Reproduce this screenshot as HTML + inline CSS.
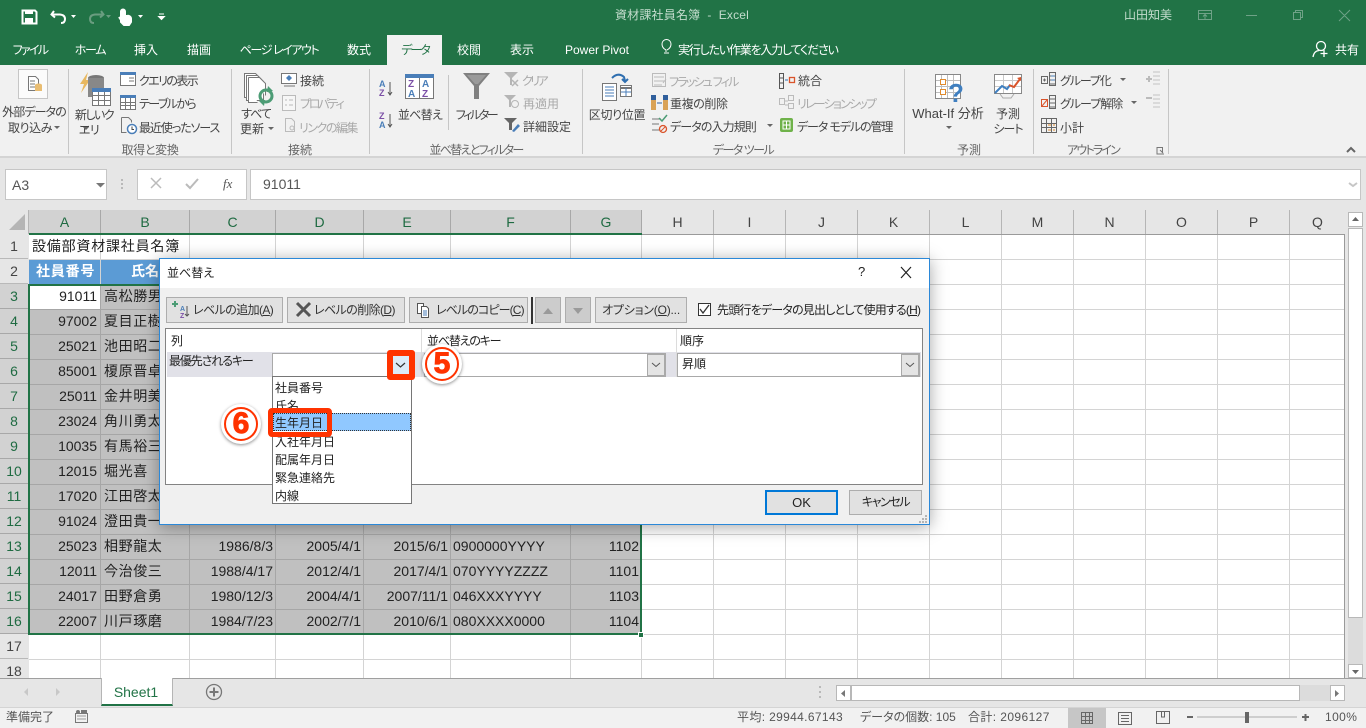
<!DOCTYPE html>
<html lang="ja"><head><meta charset="utf-8"><title>資材課社員名簿 - Excel</title>
<style>
html,body{margin:0;padding:0;width:1366px;height:728px;overflow:hidden;background:#e6e6e6}
body{position:relative;font-family:"Liberation Sans","Noto Sans CJK JP",sans-serif;font-size:12px;color:#444;font-feature-settings:"palt"}
.b{position:absolute;box-sizing:border-box}
.t{position:absolute;white-space:nowrap;line-height:16px;margin-top:1px}
.c{transform:translateX(-50%)}
.w{color:#fff}.g{color:#a9a9a9}.l{color:#666}
svg{position:absolute;left:0;top:0}
.ch,.rh{position:absolute;text-align:center;color:#444;font-size:14px}
.ch{top:210px;height:24px;line-height:24px;border-right:1px solid #b5b5b5;box-sizing:border-box;background:#e6e6e6}
.ch.s{background:#d2d2d2;color:#1f6b42;border-right-color:#a8a8a8}
.rh{left:0;width:28px;height:25px;line-height:25px;background:#e6e6e6;border-bottom:1px solid #b9b9b9;box-sizing:border-box}
.rh.s{background:#d2d2d2;color:#1f6b42;border-bottom-color:#a8a8a8}
.d{position:absolute;height:25px;line-height:24px;font-size:14px;color:#222;white-space:nowrap;overflow:hidden}
.n{letter-spacing:.6px}
.r{text-align:right}
.btn{position:absolute;box-sizing:border-box;background:#e1e1e1;border:1px solid #adadad;height:26px;top:297px;line-height:24px;color:#333;white-space:nowrap}
.it{position:absolute;left:275px;line-height:18px;height:18px;font-size:12px;color:#222}
</style></head><body>

<!-- title + tabs -->
<div class="b" style="left:0;top:0;width:1366px;height:65px;background:#217346"></div>
<div class="b" style="left:387px;top:35px;width:55px;height:30px;background:#f1f1f1"></div>
<div class="t c" style="left:682px;top:6px;color:#c4dccd;letter-spacing:.2px">資材課社員名簿&nbsp; -&nbsp; Excel</div>
<div class="t" style="left:1124px;top:6px;color:#c4dccd">山田知美</div>
<div class="t c w" style="left:30px;top:41px;letter-spacing:-1.700px">ファイル</div>
<div class="t c w" style="left:90px;top:41px;letter-spacing:-1.300px">ホーム</div>
<div class="t c w" style="left:146px;top:41px">挿入</div>
<div class="t c w" style="left:199px;top:41px">描画</div>
<div class="t c w" style="left:279px;top:41px;letter-spacing:-1.400px">ページ レイアウト</div>
<div class="t c w" style="left:359px;top:41px">数式</div>
<div class="t c" style="left:415px;top:41px;color:#217346;letter-spacing:-2px">データ</div>
<div class="t c w" style="left:469px;top:41px">校閲</div>
<div class="t c w" style="left:522px;top:41px">表示</div>
<div class="t c w" style="left:597px;top:41px">Power Pivot</div>
<div class="t w" style="left:678px;top:41px;letter-spacing:-1.200px">実行したい作業を入力してください</div>
<div class="t w" style="left:1335px;top:41px">共有</div>

<!-- ribbon -->
<div class="b" style="left:0;top:65px;width:1366px;height:93px;background:#f1f1f1;border-bottom:2px solid #d4d4d4"></div>
<div class="b" style="left:18px;top:69px;width:30px;height:30px;background:#fbfbfb;border:1px solid #c6c6c6"></div>
<div class="t c" style="left:34px;top:103px;letter-spacing:-.9px">外部データの</div>
<div class="t c" style="left:30px;top:119px;letter-spacing:-.4px">取り込み</div>
<div class="t c" style="left:94px;top:106px;letter-spacing:-1.500px">新しいク</div>
<div class="t c" style="left:89px;top:121px;letter-spacing:-.5px">エリ</div>
<div class="t" style="left:139px;top:72px;letter-spacing:-1.600px">クエリの表示</div>
<div class="t" style="left:139px;top:95px;letter-spacing:-1.600px">テーブルから</div>
<div class="t" style="left:139px;top:119px;letter-spacing:-1.100px">最近使ったソース</div>
<div class="t c l" style="left:150px;top:141px;letter-spacing:-.3px">取得と変換</div>
<div class="t c" style="left:256px;top:105px;letter-spacing:-1px">すべて</div>
<div class="t c" style="left:252px;top:120px">更新</div>
<div class="t" style="left:300px;top:72px">接続</div>
<div class="t g" style="left:300px;top:95px;letter-spacing:-2.200px">プロパティ</div>
<div class="t g" style="left:299px;top:119px;letter-spacing:-1.500px">リンクの編集</div>
<div class="t c l" style="left:300px;top:141px">接続</div>
<div class="t c" style="left:420px;top:106px;letter-spacing:-.7px">並べ替え</div>
<div class="t c" style="left:476px;top:106px;letter-spacing:-2.400px">フィルター</div>
<div class="t g" style="left:522px;top:72px;letter-spacing:-2.600px">クリア</div>
<div class="t g" style="left:523px;top:95px">再適用</div>
<div class="t" style="left:523px;top:118px">詳細設定</div>
<div class="t c l" style="left:476px;top:141px;letter-spacing:-1.700px">並べ替えとフィルター</div>
<div class="t c" style="left:617px;top:106px;letter-spacing:-.3px">区切り位置</div>
<div class="t g" style="left:669px;top:73px;letter-spacing:-1.800px">フラッシュ フィル</div>
<div class="t" style="left:670px;top:95px;letter-spacing:-.4px">重複の削除</div>
<div class="t" style="left:670px;top:118px;letter-spacing:-.9px">データの入力規則</div>
<div class="t" style="left:798px;top:72px">統合</div>
<div class="t g" style="left:797px;top:95px;letter-spacing:-1.800px">リレーションシップ</div>
<div class="t" style="left:797px;top:118px;letter-spacing:-1.100px">データ モデルの管理</div>
<div class="t c l" style="left:743px;top:141px;letter-spacing:-1.500px">データ ツール</div>
<div class="t c" style="left:948px;top:105px;font-size:13px">What-If 分析</div>
<div class="t c" style="left:1008px;top:105px">予測</div>
<div class="t c" style="left:1008px;top:120px;letter-spacing:-1px">シート</div>
<div class="t c l" style="left:969px;top:141px">予測</div>
<div class="t" style="left:1060px;top:72px;letter-spacing:-1.100px">グループ化</div>
<div class="t" style="left:1060px;top:95px;letter-spacing:-1px">グループ解除</div>
<div class="t" style="left:1060px;top:119px">小計</div>
<div class="t c l" style="left:1093px;top:141px;letter-spacing:-1.800px">アウトライン</div>

<!-- formula bar -->
<div class="b" style="left:5px;top:169px;width:102px;height:31px;background:#fff;border:1px solid #c6c6c6"></div>
<div class="t" style="left:12px;top:176px;font-size:14px;color:#555">A3</div>
<div class="b" style="left:137px;top:169px;width:110px;height:31px;background:#fff;border:1px solid #c6c6c6"></div>
<div class="t" style="left:223px;top:175px;font:italic 13px 'Liberation Serif',serif;color:#555">fx</div>
<div class="b" style="left:250px;top:169px;width:1111px;height:31px;background:#fff;border:1px solid #c6c6c6"></div>
<div class="t" style="left:263px;top:175px;font-size:14px;color:#555">91011</div>

<!-- grid background -->
<div class="b" style="left:29px;top:235px;width:1315px;height:443px;background:#fff"></div>
<div class="b" style="left:29px;top:285px;width:612px;height:349px;background:#c0c0c0"></div>
<div class="b" style="left:29px;top:260px;width:160px;height:24px;background:#5b9bd5"></div>
<div class="b" style="left:30px;top:286px;width:70px;height:23px;background:#fff"></div>
<svg width="1366" height="728" viewBox="0 0 1366 728" style="z-index:0">
<g stroke="#d4d4d4" fill="none">
<path d="M100.500 235V284M189.500 235V284M275.500 235V284M363.500 235V284M450.500 235V284M570.500 235V284M641.500 235V678M713.500 235V678M785.500 235V678M857.500 235V678M929.500 235V678M1001.500 235V678M1073.500 235V678M1145.500 235V678M1217.500 235V678M1289.500 235V678"/>
<path d="M100.500 634V678M189.500 634V678M275.500 634V678M363.500 634V678M450.500 634V678M570.500 634V678"/>
<path d="M29 259.500H1344M29 284.500H1344M642 309.500H1344M642 334.500H1344M642 359.500H1344M642 384.500H1344M642 409.500H1344M642 434.500H1344M642 459.500H1344M642 484.500H1344M642 509.500H1344M642 534.500H1344M642 559.500H1344M642 584.500H1344M642 609.500H1344M29 634.500H1344M29 659.500H1344"/>
</g>
<g stroke="#a6a6a6" fill="none">
<path d="M100.500 285V634M189.500 285V634M275.500 285V634M363.500 285V634M450.500 285V634M570.500 285V634"/>
<path d="M29 309.500H641M29 334.500H641M29 359.500H641M29 384.500H641M29 409.500H641M29 434.500H641M29 459.500H641M29 484.500H641M29 509.500H641M29 534.500H641M29 559.500H641M29 584.500H641M29 609.500H641"/>
</g>
</svg>

<!-- column headers -->
<div class="ch" style="left:0;width:29px"></div>
<div class="ch s" style="left:29px;width:72px">A</div>
<div class="ch s" style="left:101px;width:89px">B</div>
<div class="ch s" style="left:190px;width:86px">C</div>
<div class="ch s" style="left:276px;width:88px">D</div>
<div class="ch s" style="left:364px;width:87px">E</div>
<div class="ch s" style="left:451px;width:120px">F</div>
<div class="ch s" style="left:571px;width:71px">G</div>
<div class="ch" style="left:642px;width:72px">H</div>
<div class="ch" style="left:714px;width:72px">I</div>
<div class="ch" style="left:786px;width:72px">J</div>
<div class="ch" style="left:858px;width:72px">K</div>
<div class="ch" style="left:930px;width:72px">L</div>
<div class="ch" style="left:1002px;width:72px">M</div>
<div class="ch" style="left:1074px;width:72px">N</div>
<div class="ch" style="left:1146px;width:72px">O</div>
<div class="ch" style="left:1218px;width:72px">P</div>
<div class="ch" style="left:1290px;width:55px;border-right:0">Q</div>
<div class="b" style="left:29px;top:234px;width:1315px;height:1px;background:#9a9a9a"></div>
<div class="b" style="left:29px;top:233px;width:613px;height:2px;background:#217346"></div>
<div class="b" style="left:1344px;top:234px;width:1px;height:444px;background:#9a9a9a"></div>

<!-- row headers -->
<div class="rh" style="top:234px">1</div><div class="rh" style="top:259px">2</div>
<div class="rh s" style="top:284px">3</div><div class="rh s" style="top:309px">4</div>
<div class="rh s" style="top:334px">5</div><div class="rh s" style="top:359px">6</div>
<div class="rh s" style="top:384px">7</div><div class="rh s" style="top:409px">8</div>
<div class="rh s" style="top:434px">9</div><div class="rh s" style="top:459px">10</div>
<div class="rh s" style="top:484px">11</div><div class="rh s" style="top:509px">12</div>
<div class="rh s" style="top:534px">13</div><div class="rh s" style="top:559px">14</div>
<div class="rh s" style="top:584px">15</div><div class="rh s" style="top:609px">16</div>
<div class="rh" style="top:634px">17</div><div class="rh" style="top:659px;height:19px;border:0;overflow:hidden">18</div>

<!-- cells -->
<div class="d" style="left:32px;top:234px;letter-spacing:.8px">設備部資材課社員名簿</div>
<div class="d" style="left:36px;top:259px;color:#fff;font-weight:bold;letter-spacing:.8px">社員番号</div>
<div class="d" style="left:131px;top:259px;color:#fff;font-weight:bold">氏名</div>
<div class="d r" style="left:30px;width:67px;top:284px">91011</div><div class="d n" style="left:104px;top:284px">高松勝男</div>
<div class="d r" style="left:30px;width:67px;top:309px">97002</div><div class="d n" style="left:104px;top:309px">夏目正樹</div>
<div class="d r" style="left:30px;width:67px;top:334px">25021</div><div class="d n" style="left:104px;top:334px">池田昭二</div>
<div class="d r" style="left:30px;width:67px;top:359px">85001</div><div class="d n" style="left:104px;top:359px">榎原晋卓</div>
<div class="d r" style="left:30px;width:67px;top:384px">25011</div><div class="d n" style="left:104px;top:384px">金井明美</div>
<div class="d r" style="left:30px;width:67px;top:409px">23024</div><div class="d n" style="left:104px;top:409px">角川勇太</div>
<div class="d r" style="left:30px;width:67px;top:434px">10035</div><div class="d n" style="left:104px;top:434px">有馬裕三</div>
<div class="d r" style="left:30px;width:67px;top:459px">12015</div><div class="d n" style="left:104px;top:459px">堀光喜</div>
<div class="d r" style="left:30px;width:67px;top:484px">17020</div><div class="d n" style="left:104px;top:484px">江田啓太</div>
<div class="d r" style="left:30px;width:67px;top:509px">91024</div><div class="d n" style="left:104px;top:509px">澄田貴一</div>
<div class="d r" style="left:30px;width:67px;top:534px">25023</div><div class="d n" style="left:104px;top:534px">相野龍太</div>
<div class="d r" style="left:30px;width:67px;top:559px">12011</div><div class="d n" style="left:104px;top:559px">今治俊三</div>
<div class="d r" style="left:30px;width:67px;top:584px">24017</div><div class="d n" style="left:104px;top:584px">田野倉勇</div>
<div class="d r" style="left:30px;width:67px;top:609px">22007</div><div class="d n" style="left:104px;top:609px">川戸琢磨</div>

<div class="d r" style="left:190px;width:83px;top:534px">1986/8/3</div><div class="d r" style="left:276px;width:85px;top:534px">2005/4/1</div><div class="d r" style="left:364px;width:84px;top:534px">2015/6/1</div><div class="d" style="left:453px;top:534px">0900000YYYY</div><div class="d r" style="left:571px;width:68px;top:534px">1102</div>
<div class="d r" style="left:190px;width:83px;top:559px">1988/4/17</div><div class="d r" style="left:276px;width:85px;top:559px">2012/4/1</div><div class="d r" style="left:364px;width:84px;top:559px">2017/4/1</div><div class="d" style="left:453px;top:559px">070YYYYZZZZ</div><div class="d r" style="left:571px;width:68px;top:559px">1101</div>
<div class="d r" style="left:190px;width:83px;top:584px">1980/12/3</div><div class="d r" style="left:276px;width:85px;top:584px">2004/4/1</div><div class="d r" style="left:364px;width:84px;top:584px">2007/11/1</div><div class="d" style="left:453px;top:584px">046XXXYYYY</div><div class="d r" style="left:571px;width:68px;top:584px">1103</div>
<div class="d r" style="left:190px;width:83px;top:609px">1984/7/23</div><div class="d r" style="left:276px;width:85px;top:609px">2002/7/1</div><div class="d r" style="left:364px;width:84px;top:609px">2010/6/1</div><div class="d" style="left:453px;top:609px">080XXXX0000</div><div class="d r" style="left:571px;width:68px;top:609px">1104</div>

<!-- selection border -->
<div class="b" style="left:28px;top:284px;width:614px;height:351px;border:2px solid #217346"></div>
<div class="b" style="left:638px;top:632px;width:6px;height:6px;background:#217346;border:1px solid #fff"></div>

<!-- scrollbars and sheet tabs -->
<div class="b" style="left:1345px;top:210px;width:21px;height:468px;background:#e6e6e6"></div>
<div class="b" style="left:1348px;top:228px;width:15px;height:436px;background:#dcdcdc"></div>
<div class="b" style="left:1348px;top:228px;width:15px;height:390px;background:#fff;border:1px solid #b8b8b8"></div>
<div class="b" style="left:1348px;top:212px;width:15px;height:15px;background:#fff;border:1px solid #b8b8b8"></div>
<div class="b" style="left:1348px;top:664px;width:15px;height:14px;background:#fff;border:1px solid #b8b8b8"></div>
<div class="b" style="left:0;top:678px;width:1366px;height:29px;background:#e6e6e6;border-top:1px solid #9f9f9f"></div>
<div class="b" style="left:101px;top:678px;width:72px;height:28px;background:#fff;border:1px solid #b5b5b5;border-top:0;border-bottom:2px solid #217346"></div>
<div class="t c" style="left:136px;top:683px;font-size:14px;color:#217346">Sheet1</div>
<div class="b" style="left:836px;top:685px;width:508px;height:16px;background:#dcdcdc"></div>
<div class="b" style="left:851px;top:685px;width:449px;height:16px;background:#fff;border:1px solid #b8b8b8"></div>
<div class="b" style="left:836px;top:685px;width:15px;height:16px;background:#fff;border:1px solid #b8b8b8"></div>
<div class="b" style="left:1330px;top:685px;width:15px;height:16px;background:#fff;border:1px solid #b8b8b8"></div>
<div class="b" style="left:0;top:707px;width:1366px;height:21px;background:#f1f1f1;border-top:1px solid #d4d4d4"></div>
<div class="b" style="left:1068px;top:708px;width:38px;height:20px;background:#c6c6c6"></div>
<div class="t" style="left:6px;top:708px;color:#555">準備完了</div>
<div class="t" style="left:737px;top:708px;color:#555;letter-spacing:.35px">平均: 29944.67143</div>
<div class="t" style="left:860px;top:708px;color:#555">データの個数: 105</div>
<div class="t" style="left:968px;top:708px;color:#555;letter-spacing:.4px">合計: 2096127</div>
<div class="t" style="left:1325px;top:708px;color:#555;letter-spacing:.4px">100%</div>

<!-- icons -->
<svg width="1366" height="728" viewBox="0 0 1366 728" fill="none">
<!-- QAT -->
<path d="M22.500 10.500H35L36.500 12V23.500H22.500Z" stroke="#fff" stroke-width="2"/><rect x="25" y="10" width="8" height="4" fill="#fff"/><rect x="25" y="18" width="8" height="5" fill="#fff"/>
<path d="M54 11L51.500 14.500L55 17.500M52 14.500H60Q65 15 65 19T61 23" stroke="#fff" stroke-width="2"/><path d="M71 15h5l-2.500 3z" fill="#fff"/>
<path d="M101 11L103.500 14.500L100 17.500M103 14.500H95Q90 15 90 19T94 23" stroke="#6a9d80" stroke-width="2"/><path d="M106 15h5l-2.500 3z" fill="#6a9d80"/>
<path d="M121 22V11.500a2 2 0 0 1 4 0V16h2a3 3 0 0 1 4 3v3l-2 3h-5zM119 17l2 3" stroke="#fff" stroke-width="2" fill="#fff"/><path d="M138 15h5l-2.500 3z" fill="#fff"/>
<path d="M159 14h5M158.500 16.500h6l-3 3z" stroke="#fff" fill="#fff"/>
<!-- tab icons -->
<path d="M666 54v-2q-4-2-4-6a4.500 4.500 0 0 1 9 0q0 4-4 6M664 55h5" stroke="#fff" transform="translate(0 -2)"/>
<circle cx="1321" cy="46" r="4.500" stroke="#fff" stroke-width="1.300"/><path d="M1313 57q1-6 6-6.500M1324 50v7M1320.500 53.500h7" stroke="#fff" stroke-width="1.300"/>
<!-- window -->
<path d="M1198.500 10.500h13v9h-13zM1198.500 13.500h13M1205 19v-4M1203 16.500l2-2 2 2M1246 15.500h11M1293.500 12.500h7v7h-7zM1295.500 12.500v-2h7v7h-2M1339 10l11 11M1350 10l-11 11" stroke="#6fa287"/>
<!-- ribbon seps -->
<path d="M68.500 69V154M231.500 69V154M369.500 69V154M582.500 69V154M904.500 69V154M1033.500 69V154M1168.500 69V154M448.500 75V130" stroke="#c6c6c6"/>
<!-- external data -->
<path d="M28.500 76.500h7l3 3v11h-10z" fill="#fff" stroke="#777"/><path d="M30 81h5M30 84h5M30 87h5" stroke="#777"/><ellipse cx="38.500" cy="85" rx="3.500" ry="1.500" fill="#e9bd72"/><rect x="35" y="85" width="7" height="6" fill="#e9bd72"/>
<!-- new query -->
<path d="M88 72l-8 12h4l-3 9 9-13h-4z" fill="#e8b860"/><ellipse cx="96" cy="78" rx="8" ry="3" fill="#777"/><path d="M88 78h16v19H88z" fill="#888"/>
<rect x="92.500" y="89.500" width="18" height="16" fill="#fff" stroke="#777"/><rect x="92" y="88" width="19" height="4" fill="#4a7eb8"/><path d="M98.500 92v13M104.500 92v13M93 95.500h17M93 100.500h17" stroke="#777"/>
<!-- small table icons -->
<rect x="120.500" y="72.500" width="15" height="13" fill="#fff" stroke="#777"/><rect x="120" y="72" width="16" height="3" fill="#4a7eb8"/><path d="M129 78h5M129 81h5" stroke="#777"/>
<rect x="120.500" y="95.500" width="15" height="14" fill="#fff" stroke="#777"/><rect x="120" y="95" width="16" height="3" fill="#4a7eb8"/><path d="M125.500 98v11M130.500 98v11M121 102.500h14M121 105.500h14" stroke="#777"/>
<path d="M121.500 117.500h7l3 3v2M121.500 117.500v15h5" stroke="#777"/><circle cx="132" cy="129" r="4.500" fill="#fff" stroke="#4a7eb8" stroke-width="1.500"/><path d="M132 126.500v3h2" stroke="#444"/>
<!-- refresh all -->
<path d="M244.500 73.500h11l6 6v18h-17z" fill="#fff" stroke="#777"/><path d="M246.500 75.500h11l6 6v19h-17z" fill="#fff" stroke="#777"/><path d="M248.500 77.500h11l6 6v12M248.500 77.500v25h9" fill="#fff" stroke="#777"/>
<circle cx="266" cy="96" r="6" stroke="#4c9c75" stroke-width="3"/><path d="M268 86l5 5-6 1z" fill="#4c9c75"/><path d="M264 106l-5-5 6-1z" fill="#4c9c75"/>
<!-- connections small -->
<rect x="281.500" y="73.500" width="15" height="10" fill="#fff" stroke="#777"/><path d="M284 86h11" stroke="#777"/><path d="M289 75l3 3-3 3-3-3z" fill="#4a7eb8"/>
<rect x="282.500" y="95.500" width="13" height="15" fill="#f6f6f6" stroke="#bbb"/><path d="M285 100h2M285 105h2M289 100h4M289 105h4" stroke="#bbb"/>
<path d="M285.500 118.500h6l3 3v10h-9z" stroke="#bbb"/><path d="M290 128a2 2 0 1 1 4 0 2 2 0 1 1-4 0" stroke="#bbb"/>
<!-- sort -->
<g font-family="Liberation Sans" font-size="9" font-weight="bold"><text x="379" y="87" fill="#4a7eb8">A</text><text x="379" y="96" fill="#7b4fa6">Z</text><text x="379" y="119" fill="#7b4fa6">Z</text><text x="379" y="128" fill="#4a7eb8">A</text></g>
<path d="M390 82v12M388 92l2 3 2-3M390 114v12M388 124l2 3 2-3" stroke="#555"/>
<rect x="405.500" y="75.500" width="28" height="23" fill="#fff" stroke="#777"/><rect x="405" y="74" width="29" height="4" fill="#4a7eb8"/><path d="M419.500 78v20" stroke="#777"/>
<g font-family="Liberation Sans" font-size="10" font-weight="bold"><text x="408" y="87" fill="#7b4fa6">Z</text><text x="408" y="97" fill="#4a7eb8">A</text><text x="422" y="87" fill="#4a7eb8">A</text><text x="422" y="97" fill="#7b4fa6">Z</text></g>
<!-- filter -->
<path d="M463 73h27l-11 13v13h-5V86z" fill="#808080"/><path d="M467 75h19l-8 9h-3z" fill="#9a9a9a"/>
<path d="M504 72h14l-6 6v7h-2v-7z" fill="#b5b5b5"/><path d="M512 80l6 6M518 80l-6 6" stroke="#b5b5b5" stroke-width="1.500"/>
<path d="M504 95h12l-5 5v7h-2v-7z" fill="#b5b5b5"/><circle cx="515" cy="104" r="3.500" stroke="#b5b5b5"/>
<path d="M504 118h13l-5 5v7h-3v-7z" fill="#666"/><path d="M512 131l6-7 2 2-6 6z" fill="#4a7eb8"/>
<!-- text to columns -->
<rect x="602.500" y="83.500" width="14" height="17" fill="#fff" stroke="#777"/><path d="M605 87h9M605 90h9M605 93h9M605 96h9" stroke="#4a7eb8"/>
<rect x="620.500" y="85.500" width="11" height="11" fill="#fff" stroke="#777"/><path d="M621 88h10" stroke="#777" stroke-width="2"/><path d="M626 88v8M621 92h10" stroke="#4a7eb8"/>
<path d="M612 78q6-6 12-1l1 4M622 79l3 3 3-3" stroke="#2f6fb0" stroke-width="2"/>
<!-- data tools -->
<rect x="652.500" y="73.500" width="13" height="13" stroke="#bbb"/><path d="M654 77h10M654 81h10M654 85h8M663 83l3-4" stroke="#bbb"/>
<rect x="651" y="95" width="5" height="15" fill="#d9a256"/><rect x="651" y="95" width="5" height="5" fill="#2f5f9c"/><rect x="663" y="95" width="5" height="15" fill="#d9a256"/><rect x="663" y="95" width="5" height="5" fill="#2f5f9c"/><path d="M657 103h5" stroke="#2f5f9c"/>
<path d="M652 119h9M652 124h7M652 130h7" stroke="#777"/><path d="M659 118l3 3 5-6" stroke="#4c9c75" stroke-width="1.500"/><circle cx="663" cy="129" r="3.500" stroke="#d9542b" stroke-width="1.300"/><path d="M660.500 131.500l5-5" stroke="#d9542b"/>
<path d="M779.500 73.500h4v15h-4zM780 78h3M780 83h3" stroke="#555"/><path d="M785 80h3" stroke="#2f6fb0"/><rect x="789.500" y="77.500" width="5" height="5" stroke="#d9542b" stroke-width="1.300"/>
<path d="M779.500 98.500h5v6h-5zM788.500 95.500h5v5h-5zM788.500 103.500h5v5h-5zM785 101h3M785 105h3" stroke="#bbb"/>
<rect x="780" y="118" width="13" height="14" rx="2" fill="#6fb24a"/><path d="M783 121h7v8h-7zM786.500 121v8M783 125h7" stroke="#fff"/>
<!-- what-if -->
<rect x="935.500" y="74.500" width="25" height="24" fill="#fff" stroke="#888"/><path d="M941.500 75v23M947.500 75v23M953.500 75v23M936 80.500h24M936 86.500h24M936 92.500h24" stroke="#bdbdbd"/><rect x="940.500" y="79.500" width="5" height="5" fill="#fff" stroke="#e08a2c"/><rect x="940.500" y="89.500" width="5" height="5" fill="#fff" stroke="#e08a2c"/>
<text x="948" y="102" font-family="Liberation Sans" font-size="26" font-weight="bold" fill="#3f7fc0">?</text>
<!-- forecast -->
<rect x="994.500" y="74.500" width="27" height="19" fill="#fff" stroke="#888"/><path d="M1003.500 75v18M1012.500 75v18M995 80.500h26M995 86.500h26" stroke="#c9c9c9"/><path d="M995 93l7-7 5 3 3-4" stroke="#3f7fc0" stroke-width="2"/><path d="M1009 85l5 2 6-8" stroke="#d9542b" stroke-width="2"/><path d="M1017 78l4-1v4z" fill="#d9542b"/><path d="M1000 94l3 4h8l3-4" stroke="#aaa"/>
<!-- outline -->
<rect x="1041.500" y="76.500" width="6" height="7" stroke="#666"/><path d="M1043 80h3M1044.500 78.500v3M1049.500 72.500h6v13h-6zM1050 76h5M1050 80h5M1050 84h5" stroke="#666"/><path d="M1051 76h4M1051 80h4" stroke="#4a7eb8"/>
<rect x="1041.500" y="99.500" width="6" height="7" stroke="#d9542b"/><path d="M1042 106l5-6" stroke="#d9542b"/><path d="M1049.500 95.500h6v13h-6zM1050 99h5M1050 103h5M1050 107h5" stroke="#666"/>
<rect x="1041.500" y="118.500" width="15" height="14" stroke="#666"/><path d="M1046.500 118v14M1051.500 118v14M1042 123.500h14M1042 127.500h14" stroke="#666"/><path d="M1048 125h3M1053 125h2M1048 130h3M1053 130h2" stroke="#e08a2c"/>
<path d="M1146 79h6M1149 76v6" stroke="#bbb" stroke-width="2"/><path d="M1153 72h7M1153 76h7M1153 80h7M1153 84h7" stroke="#c4c4c4"/>
<path d="M1146 98h6" stroke="#bbb" stroke-width="2"/><path d="M1153 95h7M1153 99h7M1153 103h7M1153 107h7" stroke="#c4c4c4"/>
<path d="M1157.500 147.500h5v5M1157 147v7h7M1160 150l3 3" stroke="#777"/>
<path d="M1347 152l4-4 4 4" stroke="#666" stroke-width="2"/>
<!-- dropdown triangles -->
<g fill="#666"><path d="M54 126h6l-3 3zM83 127h6l-3 3zM268 127h6l-3 3zM767 124h6l-3 3zM946 126h6l-3 3zM1120 78h6l-3 3zM1131 101h6l-3 3z"/></g>
<!-- formula bar -->
<path d="M96 183h9l-4.500 4.500z" fill="#777"/><path d="M122 179v2M122 183v2M122 187v2" stroke="#aaa" stroke-width="1.500"/>
<path d="M151 178l10 10M161 178l-10 10" stroke="#bbb" stroke-width="1.500"/><path d="M186 184l4 4 8-9" stroke="#bbb" stroke-width="2"/>
<path d="M1349 183l4 3 4-3" stroke="#c6c6c6" stroke-width="2"/>
<!-- corner, scroll -->
<path d="M25 214V230H9z" fill="#b5b5b5"/>
<path d="M1352 221h7l-3.500-4zM1352 670h7l-3.500 4z" fill="#666"/>
<path d="M845 690v7l-4-3.500zM1335 690v7l4-3.500z" fill="#777"/>
<path d="M28 688v8l-4-4zM56 688v8l4-4z" fill="#c8c8c8"/>
<circle cx="214" cy="692" r="7.500" stroke="#777" stroke-width="1.300"/><path d="M209.500 692h9M214 687.500v9" stroke="#777" stroke-width="2"/>
<path d="M820 686v2M820 691v2M820 696v2" stroke="#aaa" stroke-width="1.500"/>
<!-- status -->
<rect x="75.500" y="713.500" width="12" height="9" stroke="#777"/><circle cx="78" cy="712" r="2" fill="#777"/><rect x="81" y="710" width="6" height="3" fill="#777"/><path d="M77 716h9M77 719h9" stroke="#999"/>
<path d="M1081.500 712.500h11v11h-11zM1085.500 713v10M1089.500 713v10M1082 716.500h10M1082 720.500h10" stroke="#666"/>
<path d="M1118.500 712.500h13v12h-13zM1121 715.500h8M1121 718.500h8M1121 721.500h8" stroke="#666"/>
<path d="M1156.500 711.500h13v12h-13zM1161.500 712v5h3v-5" stroke="#666"/>
<path d="M1187 717h6M1302 717h7M1305.500 714v7" stroke="#666" stroke-width="2"/><path d="M1197 717h100" stroke="#aaa"/><rect x="1245" y="712" width="4" height="11" fill="#666"/>
</svg>

<!-- dialog -->
<div class="b" style="left:159px;top:258px;width:771px;height:267px;background:#f0f0f0;border:1px solid #2b88d8;box-shadow:0 2px 16px rgba(0,0,0,.35)"></div>
<div class="b" style="left:160px;top:259px;width:769px;height:29px;background:#fff"></div>
<div class="t" style="left:167px;top:264px;color:#222">並べ替え</div>
<div class="t" style="left:858px;top:263px;font-size:13px;color:#222">?</div>

<div class="btn" style="left:166px;width:117px;padding-left:26px;letter-spacing:-.6px">レベルの追加(<u>A</u>)</div>
<div class="btn" style="left:287px;width:118px;padding-left:26px;letter-spacing:-.6px">レベルの削除(<u>D</u>)</div>
<div class="btn" style="left:409px;width:119px;padding-left:26px;letter-spacing:-.9px">レベルのコピー(<u>C</u>)</div>
<div class="b" style="left:531px;top:297px;width:2px;height:27px;background:#333"></div>
<div class="btn" style="left:535px;width:26px;background:#ccc"></div>
<div class="btn" style="left:565px;width:26px;background:#ccc"></div>
<div class="btn" style="left:595px;width:92px;text-align:center;letter-spacing:-.2px">オプション(<u>O</u>)...</div>
<div class="b" style="left:698px;top:303px;width:13px;height:13px;background:#fff;border:1px solid #333"></div>
<div class="t" style="left:717px;top:301px;color:#222;letter-spacing:-.8px">先頭行をデータの見出しとして使用する(<u>H</u>)</div>

<div class="b" style="left:165px;top:328px;width:758px;height:157px;background:#fff;border:1px solid #838383"></div>
<div class="b" style="left:167px;top:352px;width:754px;height:25px;background:#e1e1e8"></div>
<div class="b" style="left:421px;top:329px;width:1px;height:48px;background:#dcdcdc"></div>
<div class="b" style="left:676px;top:329px;width:1px;height:48px;background:#dcdcdc"></div>
<div class="t" style="left:171px;top:332px;color:#222">列</div>
<div class="t" style="left:427px;top:332px;color:#222;letter-spacing:-1.200px">並べ替えのキー</div>
<div class="t" style="left:680px;top:332px;color:#222">順序</div>
<div class="t" style="left:169px;top:352px;color:#222;letter-spacing:-1.100px">最優先されるキー</div>
<div class="b" style="left:272px;top:353px;width:143px;height:24px;background:#fff;border:1px solid #a9a9a9"></div>
<div class="b" style="left:424px;top:353px;width:242px;height:24px;background:#fff;border:1px solid #a9a9a9"></div>
<div class="b" style="left:647px;top:354px;width:18px;height:22px;background:#e4e4e4;border:1px solid #a9a9a9"></div>
<div class="b" style="left:677px;top:353px;width:243px;height:24px;background:#fff;border:1px solid #a9a9a9"></div>
<div class="b" style="left:901px;top:354px;width:18px;height:22px;background:#e4e4e4;border:1px solid #a9a9a9"></div>
<div class="t" style="left:682px;top:355px;color:#222">昇順</div>

<div class="btn" style="left:765px;top:490px;width:73px;height:25px;border:2px solid #0078d7;text-align:center;line-height:21px;font-size:13px;color:#222">OK</div>
<div class="btn" style="left:849px;top:490px;width:73px;height:25px;text-align:center;line-height:23px;color:#222;letter-spacing:-1.400px">キャンセル</div>

<!-- dropdown list -->
<div class="b" style="left:272px;top:376px;width:140px;height:128px;background:#fff;border:1px solid #767676"></div>
<div class="b" style="left:273px;top:413px;width:138px;height:18px;background:#90c8ff;border:1px dotted #333"></div>
<div class="it" style="top:379px">社員番号</div>
<div class="it" style="top:397px">氏名</div>
<div class="it" style="top:433px">入社年月日</div>
<div class="it" style="top:451px">配属年月日</div>
<div class="it" style="top:469px">緊急連絡先</div>
<div class="it" style="top:487px">内線</div>
<div class="b" style="left:268px;top:408px;width:64px;height:29px;border:5px solid #ff3300;border-radius:4px"></div>
<div class="it" style="top:414px">生年月日</div>

<!-- red button highlight -->
<div class="b" style="left:387px;top:350px;width:28px;height:30px;background:#dcebf8;border:6px solid #ff3300;border-radius:3px"></div>

<!-- circled numbers -->
<div class="b" style="left:422px;top:344px;width:40px;height:40px;border-radius:50%;background:#fff;box-shadow:0 1px 3px rgba(0,0,0,.45)"></div>
<div class="b" style="left:425px;top:347px;width:34px;height:34px;border-radius:50%;border:2.500px solid #ff3300;text-align:center;line-height:29px;font-size:30px;font-weight:bold;color:#ff3300;-webkit-text-stroke:1px #ff3300">5</div>
<div class="b" style="left:221px;top:404px;width:40px;height:40px;border-radius:50%;background:#fff;box-shadow:0 1px 3px rgba(0,0,0,.45)"></div>
<div class="b" style="left:224px;top:407px;width:34px;height:34px;border-radius:50%;border:2.500px solid #ff3300;text-align:center;line-height:29px;font-size:30px;font-weight:bold;color:#ff3300;-webkit-text-stroke:1px #ff3300">6</div>

<!-- dialog icons -->
<svg width="1366" height="728" viewBox="0 0 1366 728" fill="none">
<path d="M901 267l10 11M911 267l-10 11" stroke="#222" stroke-width="1.200"/>
<path d="M172 304h6M175 301v6" stroke="#4c9c75" stroke-width="2"/>
<text x="180" y="311" font-family="Liberation Sans" font-size="7" font-weight="bold" fill="#4a7eb8">A</text><text x="180" y="318" font-family="Liberation Sans" font-size="7" font-weight="bold" fill="#7b4fa6">Z</text>
<path d="M187 306v10M185 314l2 2 2-2" stroke="#555"/>
<path d="M297 303l13 13M310 303l-13 13" stroke="#555" stroke-width="3"/>
<path d="M417.500 303.500h6v10h-6z" fill="#fff" stroke="#555"/><path d="M421.500 306.500h5l2 2v9h-7z" fill="#fff" stroke="#555"/><path d="M423 311h4M423 313h4M423 315h4" stroke="#4a7eb8"/>
<path d="M543 314l5-6 5 6z" fill="#9a9a9a"/><path d="M573 308l5 6 5-6z" fill="#9a9a9a"/>
<path d="M700 309l3 4 6-8" stroke="#333" stroke-width="1.300"/>
<path d="M396 363l4.500 4 4.500-4" stroke="#333" stroke-width="1.200"/>
<path d="M652 363l4 3.500 4-3.500M906 363l4 3.500 4-3.500" stroke="#555"/>
<g fill="#b5b5b5"><rect x="925" y="515" width="2" height="2"/><rect x="922" y="518" width="2" height="2"/><rect x="925" y="518" width="2" height="2"/><rect x="919" y="521" width="2" height="2"/><rect x="922" y="521" width="2" height="2"/><rect x="925" y="521" width="2" height="2"/></g>
</svg>
</body></html>
